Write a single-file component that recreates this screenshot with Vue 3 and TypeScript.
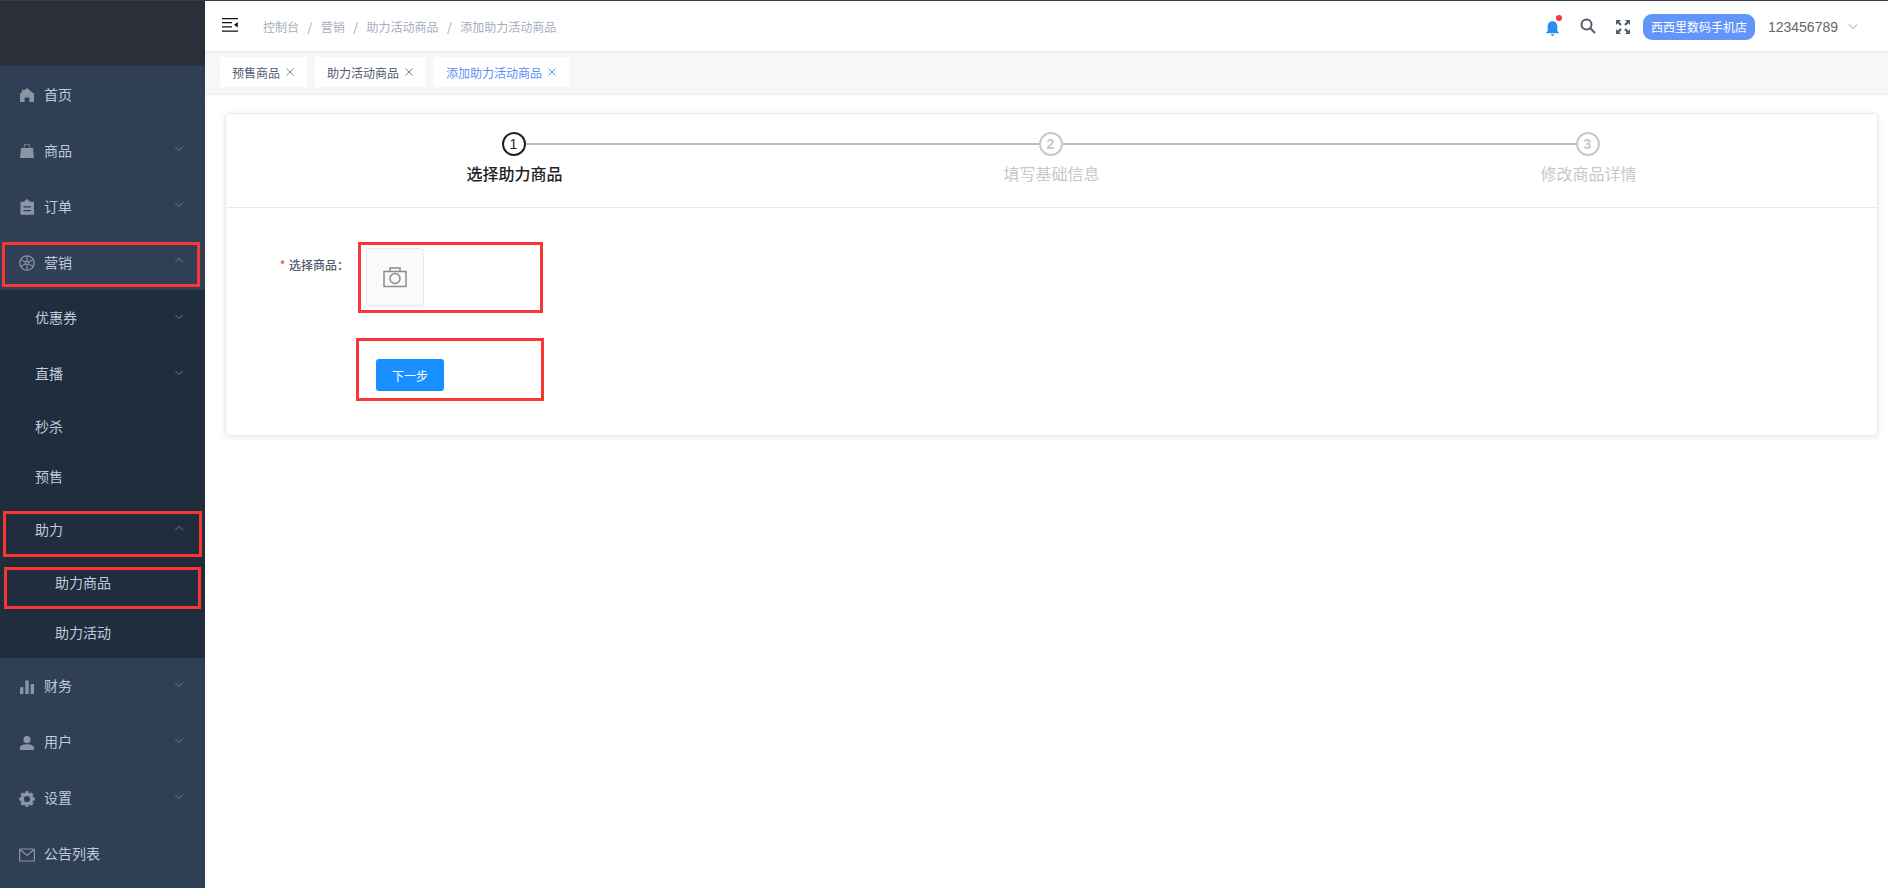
<script setup lang="ts">
interface MenuItem { label: string; icon?: string; arrow?: 'up' | 'down'; level: 0 | 1 | 2; h: number }
const top1: MenuItem[] = [
  { label: '首页', icon: 'home', level: 0, h: 56 },
  { label: '商品', icon: 'bag', arrow: 'down', level: 0, h: 56 },
  { label: '订单', icon: 'order', arrow: 'down', level: 0, h: 56 },
  { label: '营销', icon: 'wheel', arrow: 'up', level: 0, h: 56 },
]
const subs: MenuItem[] = [
  { label: '优惠券', arrow: 'down', level: 1, h: 56 },
  { label: '直播', arrow: 'down', level: 1, h: 56 },
  { label: '秒杀', level: 1, h: 50 },
  { label: '预售', level: 1, h: 50 },
  { label: '助力', arrow: 'up', level: 1, h: 56 },
  { label: '助力商品', level: 2, h: 50 },
  { label: '助力活动', level: 2, h: 50 },
]
const top2: MenuItem[] = [
  { label: '财务', icon: 'chart', arrow: 'down', level: 0, h: 56 },
  { label: '用户', icon: 'user', arrow: 'down', level: 0, h: 56 },
  { label: '设置', icon: 'gear', arrow: 'down', level: 0, h: 56 },
  { label: '公告列表', icon: 'mail', level: 0, h: 56 },
]
const groups = [
  { cls: 'g-top', items: top1 },
  { cls: 'g-sub', items: subs },
  { cls: 'g-low', items: top2 },
]
const teeth = [0, 45, 90, 135, 180, 225, 270, 315]
const crumbs = ['控制台', '营销', '助力活动商品', '添加助力活动商品']
const tabs = [
  { label: '预售商品', active: false },
  { label: '助力活动商品', active: false },
  { label: '添加助力活动商品', active: true },
]
const steps = [
  { n: 1, label: '选择助力商品', active: true },
  { n: 2, label: '填写基础信息', active: false },
  { n: 3, label: '修改商品详情', active: false },
]
const marks = [
  { x: 2, y: 241, w: 198, h: 45 },
  { x: 3, y: 510, w: 199, h: 46 },
  { x: 4, y: 566, w: 197, h: 42 },
  { x: 358, y: 241, w: 185, h: 71 },
  { x: 356, y: 337, w: 188, h: 63 },
]
</script>

<template>
  <div class="page">
    <aside class="side">
      <div class="logo"></div>
      <div class="menu">
        <div v-for="g in groups" :key="g.cls" :class="g.cls">
          <div v-for="m in g.items" :key="m.label" class="item" :class="'lv' + m.level" :style="{ height: m.h + 'px' }">
            <svg v-if="m.icon" class="mi" viewBox="0 0 16 16">
              <path v-if="m.icon === 'home'" d="M8 1 4.500 3.800V2.500H3v2.500L1 6.700V15h4.600v-4.400h4.800V15H15V6.700Z" />
              <path v-else-if="m.icon === 'bag'" fill-rule="evenodd" d="M2 5h2.700V4a3.300 3.300 0 0 1 6.600 0v1H14l1 10H1ZM5.500 5h5V4a2.500 2.500 0 0 0-5 0Z" />
              <path v-else-if="m.icon === 'order'" fill-rule="evenodd" d="M5.500 1.500h1.200a1.300 1.300 0 0 1 2.600 0h1.200v1.200H15v13H1.500V2.700h4ZM4.500 7.300v1.300h7.500V7.300ZM4.500 11v1.300h7.500V11Z" />
              <g v-else-if="m.icon === 'wheel'" fill="none" stroke="currentColor" stroke-width="1.100">
                <circle cx="8" cy="8" r="7.200" stroke-width="1.300" />
                <circle cx="8" cy="8" r="1.600" />
                <path d="M8 1v5.400M8 9.600V15M1.900 4.500l4.700 2.700M9.400 8.800l4.700 2.700M14.100 4.500 9.400 7.200M6.600 8.800l-4.700 2.700" />
              </g>
              <path v-else-if="m.icon === 'chart'" d="M1 8.200h3.400V15H1ZM6.300 1.500h3.400V15H6.300ZM11.600 5H15v10h-3.400Z" />
              <path v-else-if="m.icon === 'user'" d="M8 1a3.600 3.600 0 1 1 0 7.200A3.600 3.600 0 0 1 8 1ZM1 15v-2c0-2.500 2.500-3.800 7-3.800s7 1.300 7 3.800v2Z" />
              <g v-else-if="m.icon === 'gear'">
                <circle cx="8" cy="8" r="4.800" fill="none" stroke="currentColor" stroke-width="3.400" />
                <rect v-for="a in teeth" :key="a" x="6.400" y=".2" width="3.200" height="3" :transform="`rotate(${a} 8 8)`" />
              </g>
              <g v-else fill="none" stroke="currentColor" stroke-width="1.200">
                <rect x=".6" y="2" width="14.800" height="12" rx=".6" />
                <path d="m1 2.500 7 6 7-6" />
              </g>
            </svg>
            <span>{{ m.label }}</span>
            <svg v-if="m.arrow" class="arrow" viewBox="0 0 12 8">
              <path :d="m.arrow === 'up' ? 'M1.500 6 6 1.500 10.500 6' : 'M1.500 2 6 6.500 10.500 2'" />
            </svg>
          </div>
        </div>
      </div>
    </aside>

    <main class="main">
      <header class="top">
        <svg class="fold" viewBox="0 0 16 14">
          <path d="M0 0h16v1.300H0ZM0 4h10v1.300H0ZM0 8.300h10v1.300H0ZM0 12.500h16v1.300H0ZM15.800 4v5.500L12 6.800Z" />
        </svg>
        <nav class="crumbs">
          <template v-for="(c, i) in crumbs" :key="c">
            <span>{{ c }}</span><em v-if="i < crumbs.length - 1">/</em>
          </template>
        </nav>
        <div class="tools">
          <span class="bell">
            <svg viewBox="0 0 14 16"><path d="M7 1.200c2.800 0 4.500 2 4.500 4.800v4l1.800 2.400H.7L2.500 10V6C2.500 3.200 4.200 1.200 7 1.200ZM5 13.500h4L7 15.300Z" /></svg>
            <i></i>
          </span>
          <svg class="search" viewBox="0 0 16 16"><circle cx="6.500" cy="6.500" r="5" /><path d="m10.300 10.300 4.700 4.700" /></svg>
          <svg class="full" viewBox="0 0 16 16"><path d="M1 1h5L4.300 2.700 6.800 5.200 5.200 6.800 2.700 4.300 1 6ZM15 1v5l-1.700-1.700-2.500 2.500-1.600-1.600 2.500-2.500L10 1ZM1 15v-5l1.700 1.700 2.500-2.500 1.600 1.600-2.500 2.500L6 15ZM15 15h-5l1.700-1.700-2.500-2.500 1.600-1.600 2.500 2.500L15 10Z" /></svg>
          <span class="shop">西西里数码手机店</span>
          <span class="account">123456789</span>
          <svg class="acc-arrow" viewBox="0 0 12 8"><path d="M1 1.500 6 6.500 11 1.500" /></svg>
        </div>
      </header>

      <div class="tabs">
        <div v-for="t in tabs" :key="t.label" class="tab" :class="{ on: t.active }">
          <span>{{ t.label }}</span>
          <svg viewBox="0 0 8 8"><path d="m.5.500 7 7M7.500.500l-7 7" /></svg>
        </div>
      </div>

      <section class="card">
        <div class="steps">
          <div v-for="s in steps" :key="s.n" class="step" :class="{ on: s.active }">
            <div class="dot">{{ s.n }}</div>
            <div class="step-label">{{ s.label }}</div>
          </div>
        </div>
        <div class="form">
          <div class="row">
            <label class="lab"><b>*</b> 选择商品：</label>
            <div class="pick">
              <svg viewBox="0 0 24 22"><path d="M1 5.500h22v15H1ZM7 5.500V2h10v3.500" /><circle cx="12" cy="12.500" r="5" /></svg>
            </div>
          </div>
          <button class="next" type="button">下一步</button>
        </div>
      </section>
    </main>

    <div v-for="(m, i) in marks" :key="i" class="mark"
      :style="{ left: m.x + 'px', top: m.y + 'px', width: m.w + 'px', height: m.h + 'px' }"></div>
  </div>
</template>

<style>
html, body { margin: 0; background: #fff; }
</style>

<style scoped>
.page {
  position: relative;
  display: flex;
  height: 888px;
  overflow: hidden;
  border-top: 1px solid #3c3c3e;
  box-sizing: border-box;
  font-family: "Noto Sans CJK SC", "Liberation Sans", sans-serif;
  font-size: 12px;
}
.side { width: 205px; flex: none; background: #2f3f55; color: #bfcbd9; display: flex; flex-direction: column; }
.logo { height: 65px; flex: none; background: #2b2f3a; }
.item { display: flex; align-items: center; box-sizing: border-box; font-size: 14px; position: relative; }
.lv0 { padding-left: 19px; }
.lv1 { padding-left: 35px; }
.lv2 { padding-left: 55px; }
.g-sub { background: #202d3d; }
.g-sub .item, .g-low .item { padding-bottom: 2px; }
.mi { width: 16px; height: 16px; margin: 2px 9px 0 0; fill: #8b95a3; color: #8b95a3; flex: none; }
.g-low .mi { margin-top: 4px; }
.arrow { position: absolute; right: 21px; top: 23px; width: 10px; height: 7px; fill: none; stroke: #7d8896; stroke-width: 1; }
.main { flex: 1; min-width: 0; display: flex; flex-direction: column; }
.top {
  height: 50px; flex: none; display: flex; align-items: center; padding: 0 30px 0 17px;
  background: #fff; box-shadow: 0 1px 4px rgba(0, 21, 41, .08); position: relative; box-sizing: border-box;
}
.fold { width: 16px; height: 14px; fill: #111; margin-top: -2px; }
.crumbs { margin-left: 25px; color: #a6aebd; display: flex; }
.crumbs em { font-style: normal; margin: 0 8.500px; color: #9aa3b2; }
.tools { margin-left: auto; display: flex; align-items: center; }
.bell { position: relative; width: 15px; height: 17px; margin-top: 4px; }
.bell svg { width: 15px; height: 17px; fill: #2d8cf0; display: block; }
.bell i { position: absolute; right: -2px; top: -5px; width: 6px; height: 6px; border-radius: 50%; background: #f5363a; }
.search { width: 16px; height: 16px; margin-left: 20px; fill: none; stroke: #515a6e; stroke-width: 2; }
.full { width: 16px; height: 16px; margin-left: 19px; margin-top: 2px; fill: #515a6e; }
.shop { margin-left: 12px; background: #6195fc; color: #fff; border-radius: 9px; height: 26px; line-height: 26px; padding: 0 8px; margin-top: 2px; white-space: nowrap; }
.account { margin-left: 13px; font-size: 14px; color: #666; font-family: "Liberation Sans", sans-serif; margin-top: 1px; }
.acc-arrow { width: 10px; height: 7px; margin-left: 10px; fill: none; stroke: #808695; stroke-width: 1; }
.tabs {
  height: 42px; flex: none; box-sizing: border-box; background: #f5f7f9; display: flex; gap: 8px;
  padding: 6px 0 6px 15px; box-shadow: 0 1px 3px rgba(0, 21, 41, .12);
}
.tab { height: 30px; background: #fff; display: flex; align-items: center; padding: 0 13px 0 12px; color: #515a6e; }
.tab svg { width: 8px; height: 8px; margin-left: 6px; fill: none; stroke: #808695; stroke-width: 1; }
.tab.on { color: #5b8ff9; }
.tab.on svg { stroke: #5b8ff9; }
.card {
  margin: 20px 10px 0 20px; height: 323px; flex: none; background: #fff; border: 1px solid #e8eaec; border-radius: 4px;
  box-shadow: 0 1px 6px rgba(0, 0, 0, .1); box-sizing: border-box;
}
.steps {
  height: 94px; box-sizing: border-box; display: grid; grid-template-columns: repeat(3, 537px); padding-left: 19px;
  border-bottom: 1px solid #e8eaec;
  background: linear-gradient(#b9bdc6, #b9bdc6) no-repeat 288px 29px / 1074px 2px;
}
.step { padding-top: 18px; display: flex; flex-direction: column; align-items: center; }
.dot {
  width: 24px; height: 24px; border: 2px solid #c5c8ce; border-radius: 50%; background: #fff; color: #c5c8ce;
  box-sizing: border-box; display: flex; align-items: center; justify-content: center; font-size: 14px; font-weight: 700;
  font-family: "Liberation Sans", sans-serif;
}
.step.on .dot { border-color: #1f2329; color: #1f2329; font-weight: 400; }
.step-label { font-size: 16px; color: #c5c8ce; margin: 5px 0 0 2px; line-height: 24px; white-space: nowrap; }
.step.on .step-label { color: #1f2329; font-weight: 500; }
.form { padding: 40px 0 0 0; }
.row { display: flex; align-items: flex-start; }
.lab { width: 123px; flex: none; text-align: right; padding-top: 7px; font-weight: 500; color: #515a6e; line-height: 20px; }
.lab b { color: #ed4014; font-weight: 400; margin-right: 1px; }
.pick {
  width: 58px; height: 58px; margin-left: 17px; border: 1px dotted #d8d8d8; background: #fafafa; border-radius: 4px; box-sizing: border-box;
  display: flex; align-items: center; justify-content: center;
}
.pick svg { width: 24px; height: 22px; fill: none; stroke: #8c8c8c; stroke-width: 1.500; }
.next {
  display: block; width: 68px; height: 32px; margin: 53px 0 0 150px; border: 0; border-radius: 3px; background: #1890ff; color: #fff;
  font-size: 12px; font-family: inherit; padding: 0;
}
.mark { position: absolute; box-sizing: border-box; border: 3px solid #f93535; pointer-events: none; }
</style>
